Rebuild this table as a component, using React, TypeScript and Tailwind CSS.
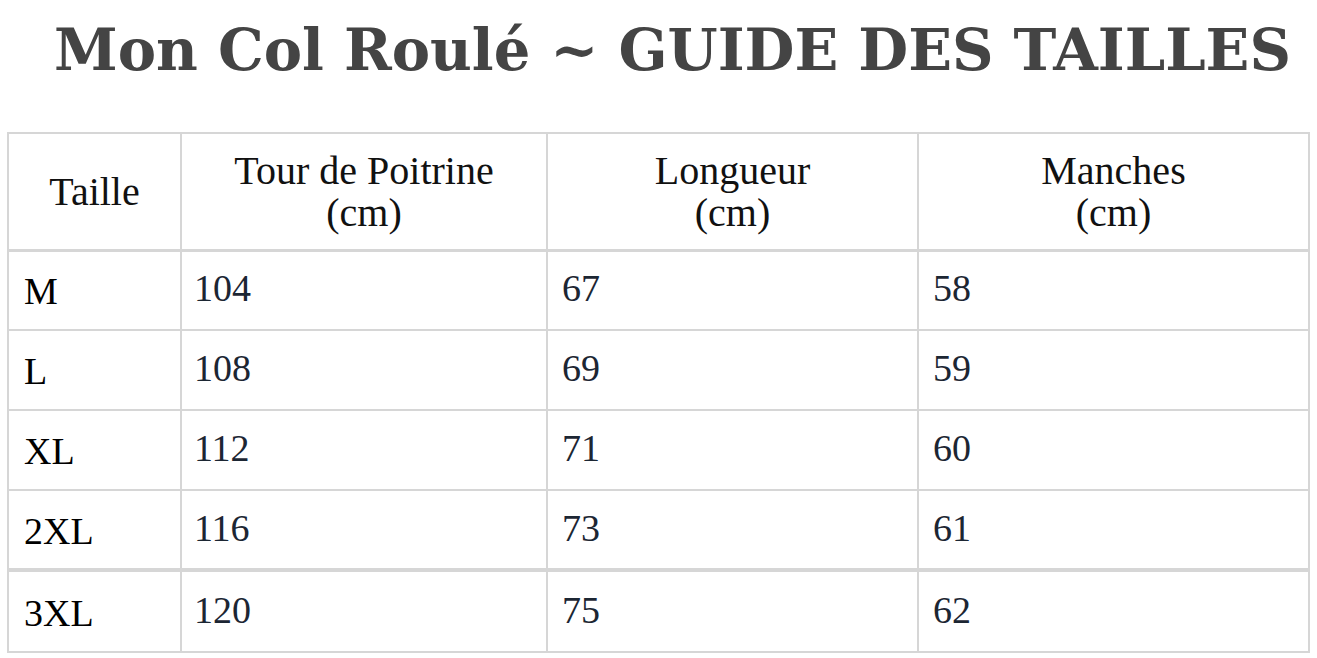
export default function App() {
  const rows = [
    ["M", "104", "67", "58"],
    ["L", "108", "69", "59"],
    ["XL", "112", "71", "60"],
    ["2XL", "116", "73", "61"],
    ["3XL", "120", "75", "62"],
  ];

  return (
    <div className="min-h-screen bg-white pt-[6px]">
      <h1 className="pl-[28px] text-center font-['DejaVu_Serif',serif] text-[57.5px] font-bold leading-[88px] text-[#444444]">
        Mon Col Roulé ~ GUIDE DES TAILLES
      </h1>
      <div className="mt-[38px] px-[7px]">
        <table className="w-[1303px] table-fixed border-collapse font-['Liberation_Serif',serif] text-[38px] leading-[42px]">
          <colgroup>
            <col className="w-[173px]" />
            <col className="w-[366px]" />
            <col className="w-[371px]" />
            <col />
          </colgroup>
          <thead>
            <tr className="h-[117px] border-b-[3px] border-[#d6d6d6] text-[40px] text-[#111111]">
              <th className="border-2 border-[#d6d6d6] px-[15px] pt-[2px] font-normal">Taille</th>
              <th className="border-2 border-[#d6d6d6] px-[15px] pt-[2px] font-normal">
                Tour de Poitrine
                <br />
                (cm)
              </th>
              <th className="border-2 border-[#d6d6d6] px-[15px] pt-[2px] font-normal">
                Longueur
                <br />
                (cm)
              </th>
              <th className="border-2 border-[#d6d6d6] px-[15px] pt-[2px] font-normal">
                Manches
                <br />
                (cm)
              </th>
            </tr>
          </thead>
          <tbody className="text-[#1c2633]">
            {rows.map((r, i) => (
              <tr
                key={r[0]}
                className={`${i === 4 ? "h-[82px]" : "h-[80px]"} ${i === 3 ? "border-b-[4px]" : ""} border-[#d6d6d6]`}
              >
                <td className="border-2 border-[#d6d6d6] px-[15px] pt-[2px] text-black">{r[0]}</td>
                <td className="border-2 border-[#d6d6d6] px-[12px] pb-[4px]">{r[1]}</td>
                <td className="border-2 border-[#d6d6d6] px-[14px] pb-[4px]">{r[2]}</td>
                <td className="border-2 border-[#d6d6d6] px-[14px] pb-[4px]">{r[3]}</td>
              </tr>
            ))}
          </tbody>
        </table>
      </div>
    </div>
  );
}
